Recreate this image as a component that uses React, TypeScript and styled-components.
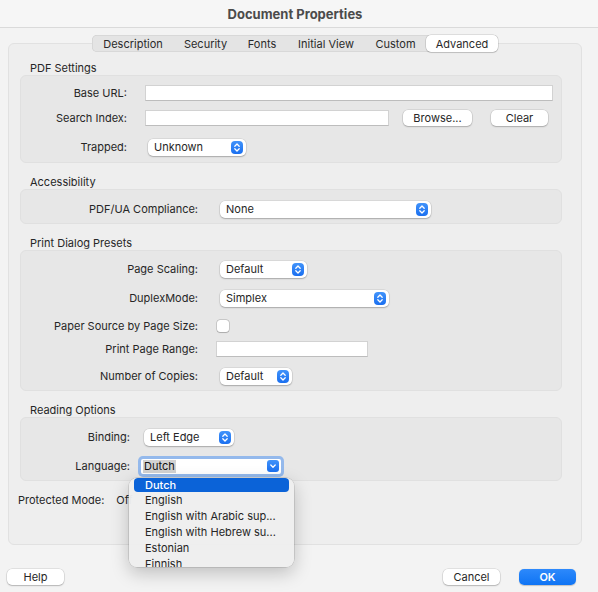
import React from 'react';
import styled, { createGlobalStyle, css } from 'styled-components';

const GlobalStyle = createGlobalStyle`
  html, body {
    margin: 0;
    padding: 0;
    background: #f3f3f3;
  }
  body {
    font-family: Inter, "Noto Sans", sans-serif;
    -webkit-font-smoothing: antialiased;
  }
`;

const Window = styled.div`
  width: 598px;
  height: 592px;
  overflow: hidden;
  background: #f3f3f3;
  color: #262626;
  font-size: 11px;
  display: flex;
  flex-direction: column;
`;

const TitleBar = styled.div`
  height: 27px;
  flex-shrink: 0;
  border-bottom: 1px solid #dadada;
  background: #f6f6f6;
  display: flex;
  align-items: center;
  justify-content: center;
  padding-right: 8px;
  font-size: 13px;
  font-weight: 700;
  color: #4b4b4b;
`;

const TabPanel = styled.div`
  margin: 15px 0 0 8px;
  width: 574px;
  height: 502px;
  box-sizing: border-box;
  border: 1px solid #e1e1e1;
  border-radius: 6px;
  background: #eeeeee;
  display: flex;
  flex-direction: column;
  padding: 0 19px 0 11px;
`;

const TabBar = styled.div`
  align-self: center;
  margin: -9px 0 0 8px;
  display: flex;
  height: 17px;
  border-radius: 5px;
  background: #e4e4e4;
  box-shadow: inset 0 0 0 0.5px #cbcbcb;
`;

const Tab = styled.div<{ $w: number; $active?: boolean }>`
  width: ${({ $w }) => $w}px;
  position: relative;
  display: flex;
  align-items: center;
  justify-content: center;
  font-size: 11px;
  color: #2a2a2a;

  & + &::before {
    content: '';
    position: absolute;
    left: 0;
    top: 4px;
    bottom: 4px;
    width: 1px;
    background: #cfcfcf;
  }

  ${({ $active }) =>
    $active &&
    css`
      background: #ffffff;
      border-radius: 5px;
      box-shadow: 0 0 0 0.5px rgba(0, 0, 0, 0.18), 0 1px 1px rgba(0, 0, 0, 0.12);
      & + &::before,
      &::before {
        display: none;
      }
    `}
`;

const SectionTitle = styled.div<{ $first?: boolean }>`
  line-height: 14px;
  padding-left: 10px;
  margin-top: ${({ $first }) => ($first ? 9 : 12)}px;
`;

const Group = styled.div<{ $pt: number; $pb: number }>`
  background: #e7e7e7;
  border: 1px solid #e0e0e0;
  border-radius: 6px;
  padding: ${({ $pt, $pb }) => `${$pt}px 0 ${$pb}px`};
`;

const Row = styled.div<{ $label: number; $gap: number; $mt?: number }>`
  display: grid;
  grid-template-columns: ${({ $label }) => $label}px 1fr;
  column-gap: ${({ $gap }) => $gap}px;
  align-items: center;
  height: 20px;
  margin-top: ${({ $mt }) => $mt ?? 0}px;
`;

const Label = styled.div`
  text-align: right;
  white-space: nowrap;
`;

const Controls = styled.div<{ $gap?: number }>`
  display: flex;
  align-items: center;
  gap: ${({ $gap }) => $gap ?? 0}px;
`;

const TextInput = styled.input<{ $w: number }>`
  width: ${({ $w }) => $w}px;
  height: 16px;
  box-sizing: border-box;
  margin: 0;
  padding: 0 3px;
  background: #ffffff;
  border: 1px solid #d2d2d2;
  border-bottom-color: #bdbdbd;
  border-radius: 0;
  font: inherit;
  outline: none;
`;

const PopupBox = styled.div<{ $w: number; $shift?: number }>`
  width: ${({ $w }) => $w}px;
  height: 17px;
  box-sizing: border-box;
  margin-left: ${({ $shift }) => $shift ?? 0}px;
  background: #ffffff;
  border-radius: 5px;
  box-shadow: 0 0 0 0.5px rgba(0, 0, 0, 0.12), 0 1px 1.5px rgba(0, 0, 0, 0.22);
  display: flex;
  align-items: center;
  justify-content: space-between;
  padding: 0 3px 0 6px;
  white-space: nowrap;
`;

const Stepper = styled.span`
  width: 12px;
  height: 13px;
  border-radius: 4px;
  background: linear-gradient(#4193fa, #1a6ff0);
  display: flex;
  align-items: center;
  justify-content: center;
`;

const PushButton = styled.button<{ $w: number; $primary?: boolean }>`
  width: ${({ $w }) => $w}px;
  height: 16px;
  margin: 0;
  padding: 0;
  border: none;
  border-radius: 5px;
  font: inherit;
  font-size: 11px;
  color: #262626;
  background: #ffffff;
  box-shadow: 0 0 0 0.5px rgba(0, 0, 0, 0.14), 0 1px 1.5px rgba(0, 0, 0, 0.2);

  ${({ $primary }) =>
    $primary &&
    css`
      color: #ffffff;
      font-weight: 600;
      background: linear-gradient(#2d89fb, #0f74f4);
      box-shadow: 0 0.5px 1px rgba(0, 0, 0, 0.2);
    `}
`;

const Checkbox = styled.span`
  width: 12px;
  height: 12px;
  margin-left: 1px;
  box-sizing: border-box;
  border-radius: 3px;
  background: #ffffff;
  box-shadow: 0 0 0 0.5px rgba(0, 0, 0, 0.25), 0 0.5px 1px rgba(0, 0, 0, 0.15);
`;

const ComboWrap = styled.div`
  position: relative;
  width: 140px;
`;

const ComboField = styled.div`
  width: 140px;
  height: 15px;
  box-sizing: border-box;
  background: #ffffff;
  border-radius: 2px;
  box-shadow: 0 0 0 3px rgba(80, 148, 240, 0.55);
  display: flex;
  align-items: center;
  justify-content: space-between;
  padding: 0 2px;
`;

const Selected = styled.span`
  background: #d2d2d2;
  padding: 0 1px;
  line-height: 13px;
  color: #111;
`;

const ComboButton = styled.span`
  width: 12px;
  height: 12px;
  border-radius: 3px;
  background: linear-gradient(#4193fa, #1a6ff0);
  display: flex;
  align-items: center;
  justify-content: center;
`;

const Menu = styled.div`
  position: absolute;
  left: -12px;
  top: 19px;
  width: 165px;
  height: 89px;
  box-sizing: border-box;
  border-radius: 8px;
  overflow: hidden;
  z-index: 5;
  background: rgba(238, 238, 238, 0.97);
  box-shadow: 0 0 0 0.5px rgba(0, 0, 0, 0.2), 0 6px 18px rgba(0, 0, 0, 0.22);
`;

const MenuItem = styled.div<{ $selected?: boolean }>`
  height: 16px;
  display: flex;
  align-items: center;
  padding-left: 16px;
  white-space: nowrap;
  color: #262626;

  ${({ $selected }) =>
    $selected &&
    css`
      height: 14px;
      margin: 0 5px;
      padding-left: 11px;
      border-radius: 4px;
      background: #0b63d8;
      color: #ffffff;
      font-weight: 500;
    `}
`;

const StatusRow = styled.div`
  display: flex;
  align-items: center;
  gap: 12px;
  height: 20px;
  margin: 9px 0 0 -2px;
`;

const Footer = styled.div`
  display: flex;
  align-items: center;
  margin-top: 24px;
  padding: 0 22px 0 7px;
  gap: 19px;
`;

const Spacer = styled.div`
  flex: 1;
`;

const UpDown = () => (
  <svg width="8" height="11" viewBox="0 0 8 11" fill="none">
    <path d="M1.8 4.2 L4 2 L6.2 4.2" stroke="#fff" strokeWidth="1.3" strokeLinecap="round" strokeLinejoin="round" />
    <path d="M1.8 6.8 L4 9 L6.2 6.8" stroke="#fff" strokeWidth="1.3" strokeLinecap="round" strokeLinejoin="round" />
  </svg>
);

const Down = () => (
  <svg width="8" height="8" viewBox="0 0 8 8" fill="none">
    <path d="M1.8 3 L4 5.2 L6.2 3" stroke="#fff" strokeWidth="1.3" strokeLinecap="round" strokeLinejoin="round" />
  </svg>
);

const Popup = ({ value, w, shift }: { value: string; w: number; shift?: number }) => (
  <PopupBox $w={w} $shift={shift}>
    <span>{value}</span>
    <Stepper>
      <UpDown />
    </Stepper>
  </PopupBox>
);

const tabs = [
  { name: 'Description', w: 82 },
  { name: 'Security', w: 63 },
  { name: 'Fonts', w: 50 },
  { name: 'Initial View', w: 78 },
  { name: 'Custom', w: 61 },
  { name: 'Advanced', w: 72 },
];

const languages = ['Dutch', 'English', 'English with Arabic sup...', 'English with Hebrew su...', 'Estonian', 'Finnish'];

export default function App() {
  return (
    <>
      <GlobalStyle />
      <Window>
        <TitleBar>Document Properties</TitleBar>
        <TabPanel>
          <TabBar>
            {tabs.map((t) => (
              <Tab key={t.name} $w={t.w} $active={t.name === 'Advanced'}>
                {t.name}
              </Tab>
            ))}
          </TabBar>

          <SectionTitle $first>PDF Settings</SectionTitle>
          <Group $pt={7} $pb={5}>
            <Row $label={106} $gap={18}>
              <Label>Base URL:</Label>
              <Controls>
                <TextInput $w={408} readOnly />
              </Controls>
            </Row>
            <Row $label={106} $gap={18} $mt={5}>
              <Label>Search Index:</Label>
              <Controls>
                <TextInput $w={244} readOnly />
                <PushButton $w={69} style={{ marginLeft: 14 }}>Browse...</PushButton>
                <PushButton $w={57} style={{ marginLeft: 19 }}>Clear</PushButton>
              </Controls>
            </Row>
            <Row $label={106} $gap={18} $mt={9}>
              <Label>Trapped:</Label>
              <Controls>
                <Popup value="Unknown" w={98} shift={3} />
              </Controls>
            </Row>
          </Group>

          <SectionTitle>Accessibility</SectionTitle>
          <Group $pt={9} $pb={4}>
            <Row $label={177} $gap={18}>
              <Label>PDF/UA Compliance:</Label>
              <Controls>
                <Popup value="None" w={211} shift={4} />
              </Controls>
            </Row>
          </Group>

          <SectionTitle>Print Dialog Presets</SectionTitle>
          <Group $pt={8} $pb={4}>
            <Row $label={177} $gap={18}>
              <Label>Page Scaling:</Label>
              <Controls>
                <Popup value="Default" w={87} shift={4} />
              </Controls>
            </Row>
            <Row $label={177} $gap={18} $mt={9}>
              <Label>DuplexMode:</Label>
              <Controls>
                <Popup value="Simplex" w={169} shift={4} />
              </Controls>
            </Row>
            <Row $label={177} $gap={18} $mt={8}>
              <Label>Paper Source by Page Size:</Label>
              <Controls>
                <Checkbox />
              </Controls>
            </Row>
            <Row $label={177} $gap={18} $mt={3}>
              <Label>Print Page Range:</Label>
              <Controls>
                <TextInput $w={152} readOnly />
              </Controls>
            </Row>
            <Row $label={177} $gap={18} $mt={7}>
              <Label>Number of Copies:</Label>
              <Controls>
                <Popup value="Default" w={72} shift={4} />
              </Controls>
            </Row>
          </Group>

          <SectionTitle>Reading Options</SectionTitle>
          <Group $pt={9} $pb={4}>
            <Row $label={109} $gap={11}>
              <Label>Binding:</Label>
              <Controls>
                <Popup value="Left Edge" w={90} shift={3} />
              </Controls>
            </Row>
            <Row $label={109} $gap={11} $mt={9}>
              <Label>Language:</Label>
              <Controls>
                <ComboWrap>
                  <ComboField>
                    <Selected>Dutch</Selected>
                    <ComboButton>
                      <Down />
                    </ComboButton>
                  </ComboField>
                  <Menu>
                    {languages.map((l) => (
                      <MenuItem key={l} $selected={l === 'Dutch'}>
                        {l}
                      </MenuItem>
                    ))}
                  </Menu>
                </ComboWrap>
              </Controls>
            </Row>
          </Group>

          <StatusRow>
            <span>Protected Mode:</span>
            <span>Off</span>
          </StatusRow>
        </TabPanel>

        <Footer>
          <PushButton $w={57}>Help</PushButton>
          <Spacer />
          <PushButton $w={57}>Cancel</PushButton>
          <PushButton $w={57} $primary>
            OK
          </PushButton>
        </Footer>
      </Window>
    </>
  );
}
